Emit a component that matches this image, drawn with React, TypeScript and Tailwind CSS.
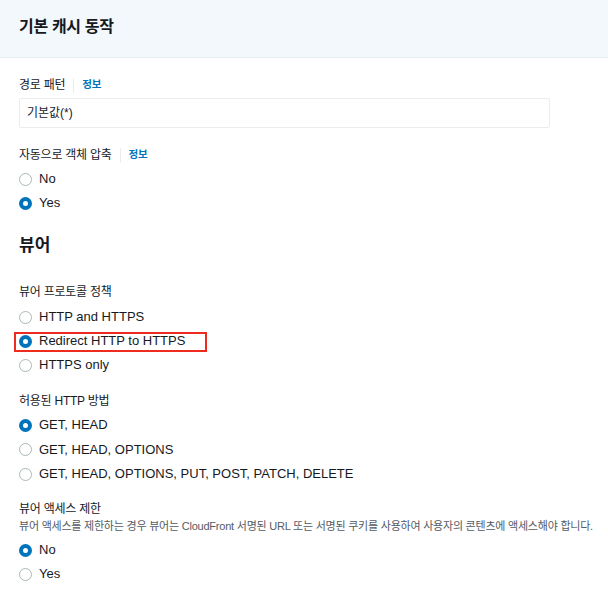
import { ReactNode } from "react";

const font = {
  fontFamily: '"Liberation Sans", "Noto Sans CJK KR", Arial, sans-serif',
};

function Radio({ checked, children }: { checked?: boolean; children: ReactNode }) {
  return (
    <div className="flex h-6 items-center gap-[7px]">
      {checked ? (
        <span className="box-border h-[13px] w-[13px] rounded-full border-[4px] border-[#0073bb] bg-white" />
      ) : (
        <span className="box-border h-[13px] w-[13px] rounded-full border border-[#aab7b8] bg-white" />
      )}
      <span className="text-[13px] text-[#16191f]">{children}</span>
    </div>
  );
}

function Label({ children, info }: { children: ReactNode; info?: boolean }) {
  return (
    <div className="flex h-[18px] items-center text-[12px] tracking-[-0.02em] text-[#16191f]">
      <span>{children}</span>
      {info && (
        <>
          <span className="mx-[8px] h-[15px] w-px bg-[#eaeded]" />
          <span className="text-[10.5px] font-bold text-[#0073bb]">정보</span>
        </>
      )}
    </div>
  );
}

export default function App() {
  return (
    <div className="h-[589px] w-[608px] overflow-hidden bg-white" style={font}>
      {/* Header */}
      <div className="flex h-[58px] items-center border-b border-[#eaeded] bg-[#f2f8fb] px-[19px] pb-[4px]">
        <h2 className="text-[16px] font-bold tracking-[-0.02em] text-[#16191f]">기본 캐시 동작</h2>
      </div>

      <div className="px-[19px]">
        <div className="mt-[18px]">
          <Label info>경로 패턴</Label>
        </div>
        <div className="mt-[4px] flex h-[30px] w-[531px] items-center rounded-[2px] border border-[#eaeded] pl-[7px] text-[12px] text-[#16191f]">
          기본값(*)
        </div>

        <div className="mt-[18px]">
          <Label info>자동으로 객체 압축</Label>
        </div>
        <div className="mt-[3px]">
          <Radio>No</Radio>
          <Radio checked>Yes</Radio>
        </div>

        <h3 className="mt-[20px] flex h-[22px] items-center text-[17px] font-bold text-[#16191f]">뷰어</h3>

        <div className="mt-[26px]">
          <Label>뷰어 프로토콜 정책</Label>
        </div>
        <div className="mt-[4px]">
          <Radio>HTTP and HTTPS</Radio>
          <div className="relative">
            <Radio checked>Redirect HTTP to HTTPS</Radio>
            <div className="absolute left-[-5px] top-[3px] h-[20px] w-[193px] border-2 border-[#ee2b1e]" />
          </div>
          <Radio>HTTPS only</Radio>
        </div>

        <div className="mt-[15px]">
          <Label>허용된 HTTP 방법</Label>
        </div>
        <div className="mt-[3px] flex flex-col gap-[0.5px]">
          <Radio checked>GET, HEAD</Radio>
          <Radio>GET, HEAD, OPTIONS</Radio>
          <Radio>GET, HEAD, OPTIONS, PUT, POST, PATCH, DELETE</Radio>
        </div>

        <div className="mt-[14px]">
          <Label>뷰어 액세스 제한</Label>
        </div>
        <p className="flex h-4 items-center whitespace-nowrap text-[11px] tracking-[-0.02em] text-[#545b64]">
          뷰어 액세스를 제한하는 경우 뷰어는 CloudFront 서명된 URL 또는 서명된 쿠키를 사용하여 사용자의 콘텐츠에 액세스해야 합니다.
        </p>
        <div className="mt-[4px]">
          <Radio checked>No</Radio>
          <Radio>Yes</Radio>
        </div>
      </div>
    </div>
  );
}
